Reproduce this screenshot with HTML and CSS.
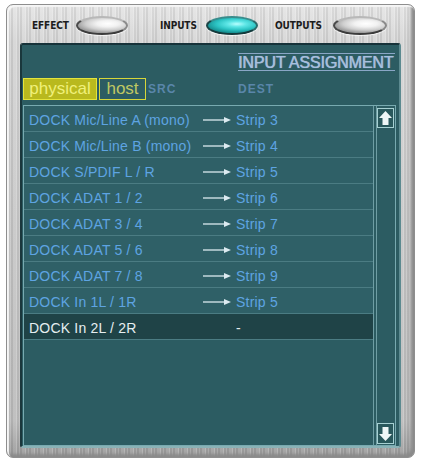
FILE: index.html
```html
<!DOCTYPE html>
<html>
<head>
<meta charset="utf-8">
<link rel="stylesheet" href="styles.css">
</head>
<body>
<div class="frame">
  <div class="topbar">
    <span class="lbl l-effect">EFFECT</span><span class="oval o-effect"></span>
    <span class="lbl l-inputs">INPUTS</span><span class="oval on"></span>
    <span class="lbl l-outputs">OUTPUTS</span><span class="oval o-outputs"></span>
  </div>
  <div class="panel">
    <div class="head"><div class="title">INPUT ASSIGNMENT</div></div>
    <div class="tabs">
      <span class="tab active">physical</span><span class="tab host">host</span>
      <span class="colhead c-src">SRC</span><span class="colhead">DEST</span>
    </div>
    <div class="list">
      <div class="rows">
        <div class="row"><span>DOCK Mic/Line A (mono)</span><svg class="arr" viewBox="0 0 28 8"><line x1="0" y1="4" x2="22" y2="4"/><polygon points="21,1 28,4 21,7"/></svg><span>Strip 3</span></div>
        <div class="row"><span>DOCK Mic/Line B (mono)</span><svg class="arr" viewBox="0 0 28 8"><line x1="0" y1="4" x2="22" y2="4"/><polygon points="21,1 28,4 21,7"/></svg><span>Strip 4</span></div>
        <div class="row"><span>DOCK S/PDIF L / R</span><svg class="arr" viewBox="0 0 28 8"><line x1="0" y1="4" x2="22" y2="4"/><polygon points="21,1 28,4 21,7"/></svg><span>Strip 5</span></div>
        <div class="row"><span>DOCK ADAT 1 / 2</span><svg class="arr" viewBox="0 0 28 8"><line x1="0" y1="4" x2="22" y2="4"/><polygon points="21,1 28,4 21,7"/></svg><span>Strip 6</span></div>
        <div class="row"><span>DOCK ADAT 3 / 4</span><svg class="arr" viewBox="0 0 28 8"><line x1="0" y1="4" x2="22" y2="4"/><polygon points="21,1 28,4 21,7"/></svg><span>Strip 7</span></div>
        <div class="row"><span>DOCK ADAT 5 / 6</span><svg class="arr" viewBox="0 0 28 8"><line x1="0" y1="4" x2="22" y2="4"/><polygon points="21,1 28,4 21,7"/></svg><span>Strip 8</span></div>
        <div class="row"><span>DOCK ADAT 7 / 8</span><svg class="arr" viewBox="0 0 28 8"><line x1="0" y1="4" x2="22" y2="4"/><polygon points="21,1 28,4 21,7"/></svg><span>Strip 9</span></div>
        <div class="row"><span>DOCK In 1L / 1R</span><svg class="arr" viewBox="0 0 28 8"><line x1="0" y1="4" x2="22" y2="4"/><polygon points="21,1 28,4 21,7"/></svg><span>Strip 5</span></div>
        <div class="row sel"><span>DOCK In 2L / 2R</span><span></span><span>-</span></div>
      </div>
      <div class="scroll">
        <div class="sbtn"><svg viewBox="0 0 15 18"><polygon points="7.5,2 14,9 10.5,9 10.5,16 4.5,16 4.5,9 1,9"/></svg></div>
        <div class="sbtn"><svg viewBox="0 0 15 19"><polygon points="7.5,17 14,10 10.5,10 10.5,3 4.5,3 4.5,10 1,10"/></svg></div>
      </div>
    </div>
  </div>
</div>
</body>
</html>
```

FILE: styles.css
```css
html, body {
  margin: 0;
  padding: 0;
  background: #ffffff;
}

.frame {
  box-sizing: border-box;
  margin: 4px 0 0 6px;
  width: 409px;
  height: 454px;
  padding: 0 13px 9px 13px;
  border: 1px solid #8e8e8e;
  border-radius: 7px;
  display: flex;
  flex-direction: column;
  background:
    repeating-linear-gradient(90deg,
      rgba(255,255,255,0.22) 0 1px,
      rgba(0,0,0,0.05) 1px 3px,
      rgba(255,255,255,0.10) 3px 4px,
      rgba(0,0,0,0.07) 4px 6px,
      rgba(255,255,255,0.05) 6px 9px),
    linear-gradient(180deg, #e6e6e6 0%, #d6d6d6 8%, #c8c8c8 50%, #bdbdbd 92%, #9c9c9c 100%);
  box-shadow: inset 2px 2px 1px #f6f6f6, inset -3px -3px 3px #8a8a8a;
}

.topbar {
  box-sizing: border-box;
  height: 38px;
  padding-top: 3px;
  display: flex;
  align-items: center;
}

.lbl {
  display: inline-block;
  font-family: "DejaVu Sans Condensed", "DejaVu Sans", sans-serif;
  font-weight: bold;
  font-size: 10px;
  color: #1c1c1c;
  letter-spacing: -0.1px;
}
.l-effect { margin-left: 12px; width: 44px; }
.l-inputs { margin-left: 32px; width: 46px; }
.l-outputs { margin-left: 17px; width: 58px; }

.oval {
  box-sizing: border-box;
  display: inline-block;
  width: 52px;
  height: 19px;
  border-radius: 50%;
  border: 2px solid;
  border-color: #b8b8b8 #8a8a8a #3c3c3c #4a4a4a;
  background: radial-gradient(ellipse 65% 60% at 62% 38%, #ffffff 0%, #f2f2f2 35%, #cfcfcf 70%, #9c9c9c 100%);
  box-shadow: 0 1px 1px rgba(255,255,255,0.8);
}
.o-outputs { width: 54px; }
.oval.on {
  border-color: #3a8c8c #2a6a6a #143a3c #1a4446;
  background: radial-gradient(ellipse 65% 60% at 60% 40%, #b8ffff 0%, #5ee6e6 30%, #2cc4c4 65%, #158c8e 100%);
}

.panel {
  box-sizing: border-box;
  width: 381px;
  height: 405px;
  border: 2px solid;
  border-color: #17333a #5c8a90 #8ab2b6 #1a373c;
  border-radius: 3px;
  background: #2c5c62;
  display: flex;
  flex-direction: column;
}

.head {
  box-sizing: border-box;
  height: 26px;
  padding-top: 8px;
}
.title {
  box-sizing: border-box;
  margin-left: 216px;
  width: 157px;
  height: 18px;
  border-top: 1px solid #8aa6c6;
  border-bottom: 1px solid #8aa6c6;
  font-family: "Liberation Sans", Arial, sans-serif;
  font-size: 16px;
  line-height: 18px;
  letter-spacing: -0.1px;
  color: #a8c0de;
  white-space: nowrap;
  overflow: visible;
  text-shadow: 0 0 1px #6f90b8, 0.4px 0 0 #a8c0de;
}

.tabs {
  margin-top: 7px;
  height: 22px;
  padding-left: 1px;
  display: flex;
  align-items: stretch;
}
.tab {
  box-sizing: border-box;
  height: 22px;
  border: 1px solid #d6d63a;
  font-family: "Liberation Sans", Arial, sans-serif;
  font-size: 17px;
  line-height: 20px;
  text-align: center;
  color: #c4cc5c;
}
.tab.active {
  width: 74px;
  background: #b9b91e;
  border-color: #e4e43c;
  color: #f0f07a;
}
.tab.host {
  width: 47px;
  margin-left: 2px;
  color: #c0c862;
}
.colhead {
  font-family: "Liberation Sans", Arial, sans-serif;
  font-weight: bold;
  font-size: 12px;
  line-height: 22px;
  letter-spacing: 1px;
  color: #5a86aa;
}
.c-src {
  margin-left: 2px;
  width: 90px;
}

.list {
  box-sizing: border-box;
  margin: 5px 0 0 1px;
  width: 373px;
  height: 341px;
  border: 1px solid #78aab0;
  display: flex;
}

.rows {
  box-sizing: border-box;
  width: 350px;
  border-right: 1px solid #6f9ea4;
  display: flex;
  flex-direction: column;
}

.row {
  box-sizing: border-box;
  height: 26px;
  padding: 3px 0 0 5px;
  border-bottom: 1px solid #4b7c83;
  background: #2f6067;
  display: grid;
  grid-template-columns: 174px 33px auto;
  align-items: center;
  font-family: "Liberation Sans", Arial, sans-serif;
  font-size: 14px;
  line-height: 22px;
  letter-spacing: 0.2px;
  color: #5ea4e2;
  white-space: nowrap;
}
.row.sel {
  background: #1f4347;
  color: #e6eef0;
}

.arr {
  width: 28px;
  height: 8px;
}
.arr line {
  stroke: #dceaf0;
  stroke-width: 1.3;
}
.arr polygon {
  fill: #dceaf0;
}

.scroll {
  box-sizing: border-box;
  margin-left: 2px;
  width: 19px;
  border-left: 1px solid #6f9ea4;
  padding: 2px 0 1px 0;
  display: flex;
  flex-direction: column;
  justify-content: space-between;
}
.sbtn {
  box-sizing: border-box;
  width: 17px;
  height: 20px;
  border: 1px solid #a6d0d2;
  background: #29585c;
  display: flex;
}
.sbtn:last-child {
  height: 21px;
}
.sbtn svg {
  width: 15px;
  height: 100%;
}
.sbtn polygon {
  fill: #eef6f6;
}
```
